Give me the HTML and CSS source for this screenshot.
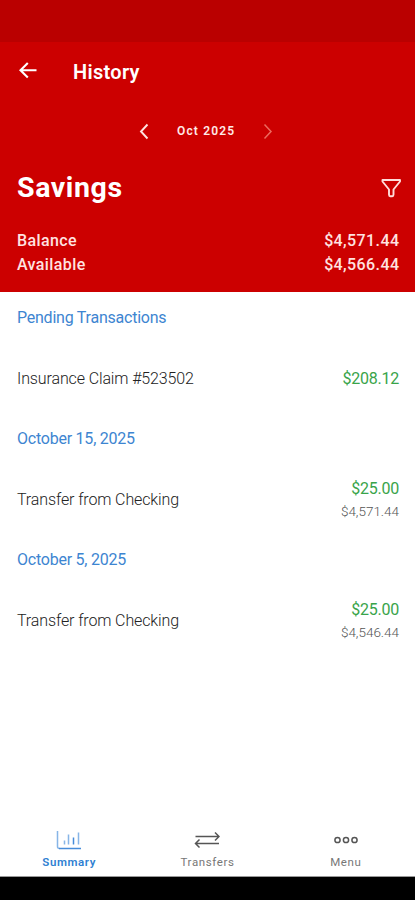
FILE: index.html
```html
<!DOCTYPE html>
<html lang="en">
<head>
<meta charset="utf-8">
<title>History</title>
<link rel="stylesheet" href="styles.css">
</head>
<body>
<div class="screen">
  <div class="status-bar"></div>
  <header class="header">
    <div class="app-bar">
      <svg class="back" width="20" height="20" viewBox="0 0 20 20"><path d="M18.500 8.300H3M9.800 1 2.500 8.300l7.300 7.300"/></svg>
      <h1 class="title">History</h1>
    </div>
    <div class="month-picker">
      <svg class="chevron" width="12" height="18" viewBox="0 0 12 18"><path d="M9.500 2.500 3 9.500l6.500 7"/></svg>
      <span class="month">Oct 2025</span>
      <svg class="chevron next" width="12" height="18" viewBox="0 0 12 18"><path d="M2.500 2.500 9 9.500l-6.500 7"/></svg>
    </div>
    <div class="account">
      <h2 class="account-name">Savings</h2>
      <svg class="filter" width="22" height="20" viewBox="0 0 22 20"><path d="M2.500 2h17.500v1.500l-6.500 8v5q0 1.700-1.200 1.700h-2.100q-1.200 0-1.200-1.700v-5L2.500 3.500z"/></svg>
    </div>
    <dl class="totals">
      <div class="total"><dt>Balance</dt><dd>$4,571.44</dd></div>
      <div class="total"><dt>Available</dt><dd>$4,566.44</dd></div>
    </dl>
  </header>
  <main class="history">
    <h3 class="group">Pending Transactions</h3>
    <div class="row">
      <span class="name">Insurance Claim #523502</span>
      <div class="amounts"><span class="amount">$208.12</span></div>
    </div>
    <h3 class="group">October 15, 2025</h3>
    <div class="row">
      <span class="name">Transfer from Checking</span>
      <div class="amounts"><span class="amount">$25.00</span><span class="running">$4,571.44</span></div>
    </div>
    <h3 class="group">October 5, 2025</h3>
    <div class="row">
      <span class="name">Transfer from Checking</span>
      <div class="amounts"><span class="amount">$25.00</span><span class="running">$4,546.44</span></div>
    </div>
  </main>
  <nav class="tabs">
    <div class="tab active">
      <svg width="26" height="20" viewBox="0 0 26 20"><path class="soft" d="M1.500 1v15.500q0 2 2 2M8.500 10.500v4M12.500 4.500v10M22.500 2.500v12"/><path d="M3 18.500h22M17.500 7.500v7"/></svg>
      <span>Summary</span>
    </div>
    <div class="tab">
      <svg width="26" height="20" viewBox="0 0 26 20"><path d="M1.500 6.500h23.500M21 2.500l4 4-4 4M25 13.500H2M5.500 9.500l-4 4 4 4"/></svg>
      <span>Transfers</span>
    </div>
    <div class="tab">
      <svg width="26" height="20" viewBox="0 0 26 20"><circle cx="4.500" cy="10" r="2.600"/><circle cx="13" cy="10" r="2.600"/><circle cx="21.500" cy="10" r="2.600"/></svg>
      <span>Menu</span>
    </div>
  </nav>
  <div class="system-bar"></div>
</div>
</body>
</html>
```
FILE: styles.css
```css
* { box-sizing: border-box; }
body { margin: 0; font-family: Roboto, "Liberation Sans", sans-serif; background: #fff; }
h1, h2, h3, dl, dd { margin: 0; }
svg { display: block; flex: none; fill: none; stroke: currentColor; }
.screen { display: flex; flex-direction: column; height: 900px; width: 415px; overflow: hidden; }
.status-bar { height: 42px; background: #ba0000; flex: none; }
.header { height: 250px; flex: none; background: #cc0000; color: #fff; }
.app-bar { display: flex; align-items: center; height: 60px; padding-left: 18px; }
.back { stroke-width: 2.1; }
.title { margin-left: 35px; font-size: 20px; line-height: 24px; font-weight: 600; letter-spacing: 0.3px; }
.month-picker { display: flex; align-items: center; height: 58px; padding-left: 138px; }
.chevron { stroke-width: 1.9; color: #ffe3e1; }
.month { width: 58px; margin: 0 27px; font-size: 12px; font-weight: 600; letter-spacing: 1.15px; white-space: nowrap; color: #ffe9e7; }
.next { color: #ec6a5e; stroke-width: 1.5; }
.account { display: flex; align-items: center; justify-content: space-between; height: 56px; padding: 0 13px 0 17px; }
.account-name { font-size: 28.5px; line-height: 34px; font-weight: 700; letter-spacing: 0.6px; }
.filter { stroke-width: 1.9; stroke-linejoin: round; color: #ffdcda; }
.totals { padding: 13px 15.6px 0 17px; }
.total { display: flex; justify-content: space-between; height: 24px; line-height: 24px; font-size: 16px; font-weight: 500; letter-spacing: 0.4px; color: #ffe3e1; }
.history { flex: 1; }
.group { height: 50px; line-height: 51px; padding-left: 17px; font-size: 16px; font-weight: 400; letter-spacing: -0.23px; color: #3d85d1; }
.row { display: flex; align-items: center; justify-content: space-between; height: 71px; padding: 1px 16px 0 17px; }
.name { font-size: 16px; font-weight: 300; letter-spacing: -0.12px; color: #222; }
.amounts { display: flex; flex-direction: column; align-items: flex-end; padding-top: 1px; }
.amount { font-size: 16px; line-height: 22px; letter-spacing: -0.25px; color: #39a44a; }
.running { font-size: 13.5px; line-height: 22px; font-weight: 300; letter-spacing: -0.02px; color: #555; }
.tabs { display: flex; flex: none; height: 61px; padding-top: 14px; border-bottom: 1px solid #999; }
.tab { flex: 1; display: flex; flex-direction: column; align-items: center; gap: 4px; font-size: 11.5px; line-height: 16px; letter-spacing: 0.6px; color: #777; }
.tab svg { color: #555; stroke-width: 1.5; }
.active { color: #2f7fd2; font-weight: 600; }
.active svg { color: #478dda; }
.soft { opacity: .65; }
.system-bar { height: 23px; flex: none; background: #000; }
```
